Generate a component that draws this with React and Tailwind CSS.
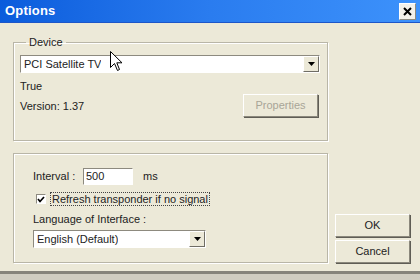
import { useState } from "react";

export default function App() {
  const [checked, setChecked] = useState(true);

  return (
    <div className="w-[420px] h-[280px] bg-[#ece9d8] flex flex-col overflow-hidden relative font-['Liberation_Sans',Arial,sans-serif] text-[11px] text-black">
      {/* TITLE BAR */}
      <div className="h-[23px] shrink-0 flex items-center justify-between pl-[5px] pr-[4px] bg-gradient-to-r from-[#0a5cdc] via-[#2a7cef] to-[#3d92fb] border-b border-[#1d56c8]">
        <span className="text-white font-bold text-[13px] tracking-[0.2px]">Options</span>
        <button className="w-[17px] h-[17px] flex items-center justify-center bg-[#f3f1ea] border border-white border-r-[#8e8b80] border-b-[#8e8b80]">
          <svg width="9" height="9" viewBox="0 0 9 9">
            <path d="M1 1 L8 8 M8 1 L1 8" stroke="#000" strokeWidth="2" />
          </svg>
        </button>
      </div>

      {/* BODY */}
      <div className="flex-1 flex pl-[13px] pt-[13px]">
        <div className="w-[315px] flex flex-col">
          {/* DEVICE GROUP */}
          <fieldset className="h-[105px] border border-[#b9b6a7] shadow-[inset_1px_1px_0_#fff,1px_1px_0_#fff] px-[6px]">
            <legend className="ml-[6px] px-[3px] leading-[13px] text-[#222]">Device</legend>
            <div className="mt-[6px]">
              <Combo value="PCI Satellite TV" width="w-[300px]" />
            </div>
            <div className="mt-[7px] leading-[13px] text-[#222]">True</div>
            <div className="flex justify-between items-start pr-[3px]">
              <div className="mt-[7px] leading-[13px] text-[#222]">Version: 1.37</div>
              <button className="mt-[1px] w-[75px] h-[23px] bg-[#ece9d8] text-[#a8a597] border border-white border-r-[#8b887c] border-b-[#8b887c] shadow-[1px_1px_0_#5f5d55]">
                Properties
              </button>
            </div>
          </fieldset>

          {/* SETTINGS GROUP */}
          <div className="mt-[12px] h-[110px] border border-[#b9b6a7] shadow-[inset_1px_1px_0_#fff,1px_1px_0_#fff] pl-[19px] pt-[14px]">
            <div className="flex items-center">
              <span className="text-[#222] w-[50px]">Interval :</span>
              <div className="w-[50px] h-[17px] bg-white border border-[#8d8a7f] border-r-white border-b-white flex items-center pl-[2px] text-[#222]">
                500
              </div>
              <span className="ml-[10px] text-[#222]">ms</span>
            </div>
            <div className="flex items-center mt-[7px] ml-[3px]">
              <button
                onClick={() => setChecked(!checked)}
                className="w-[10px] h-[10px] bg-white border border-[#8d8a7f] border-r-white border-b-white flex items-center justify-center"
              >
                {checked && (
                  <svg width="8" height="7" viewBox="0 0 8 7">
                    <path d="M1 3 L3 5.5 L7 1" stroke="#000" strokeWidth="1.7" fill="none" />
                  </svg>
                )}
              </button>
              <span className="ml-[4px] px-[1px] leading-[12px] border border-dotted border-[#444] text-[#222]">
                Refresh transponder if no signal
              </span>
            </div>
            <div className="mt-[7px] leading-[13px] text-[#222]">Language of Interface :</div>
            <div className="mt-[4px]">
              <Combo value="English (Default)" width="w-[173px]" />
            </div>
          </div>
        </div>

        {/* BUTTONS */}
        <div className="flex flex-col justify-end pb-[8px] ml-[7px] gap-[3px]">
          <Btn>OK</Btn>
          <Btn>Cancel</Btn>
        </div>
      </div>

      {/* BOTTOM EDGE */}
      <div className="h-[9px] shrink-0 border-t-[3px] border-[#85837a] bg-[#cfccc0]" />

      {/* MOUSE CURSOR */}
      <svg className="absolute left-[110px] top-[51px]" width="13" height="21" viewBox="0 0 13 21">
        <path
          d="M0.5 0.5 L0.5 16.5 L4.5 12.5 L7.5 19.5 L9.5 18.5 L6.8 11.8 L12 11.8 Z"
          fill="#fff"
          stroke="#000"
          strokeWidth="1"
        />
      </svg>
    </div>
  );
}

function Combo({ value, width }) {
  return (
    <div className={`${width} h-[18px] bg-white border border-[#8d8a7f] border-r-white border-b-white flex items-center justify-between`}>
      <span className="pl-[3px] text-[#222] truncate">{value}</span>
      <div className="w-[16px] h-[16px] bg-[#ece9d8] border border-white border-r-[#6f6d65] border-b-[#6f6d65] flex items-center justify-center">
        <svg width="7" height="4" viewBox="0 0 7 4">
          <path d="M0 0 L7 0 L3.5 4 Z" fill="#000" />
        </svg>
      </div>
    </div>
  );
}

function Btn({ children }) {
  return (
    <button className="w-[75px] h-[23px] bg-[#ece9d8] text-[#222] border border-white border-r-[#8b887c] border-b-[#8b887c] shadow-[1px_1px_0_#5f5d55]">
      {children}
    </button>
  );
}
